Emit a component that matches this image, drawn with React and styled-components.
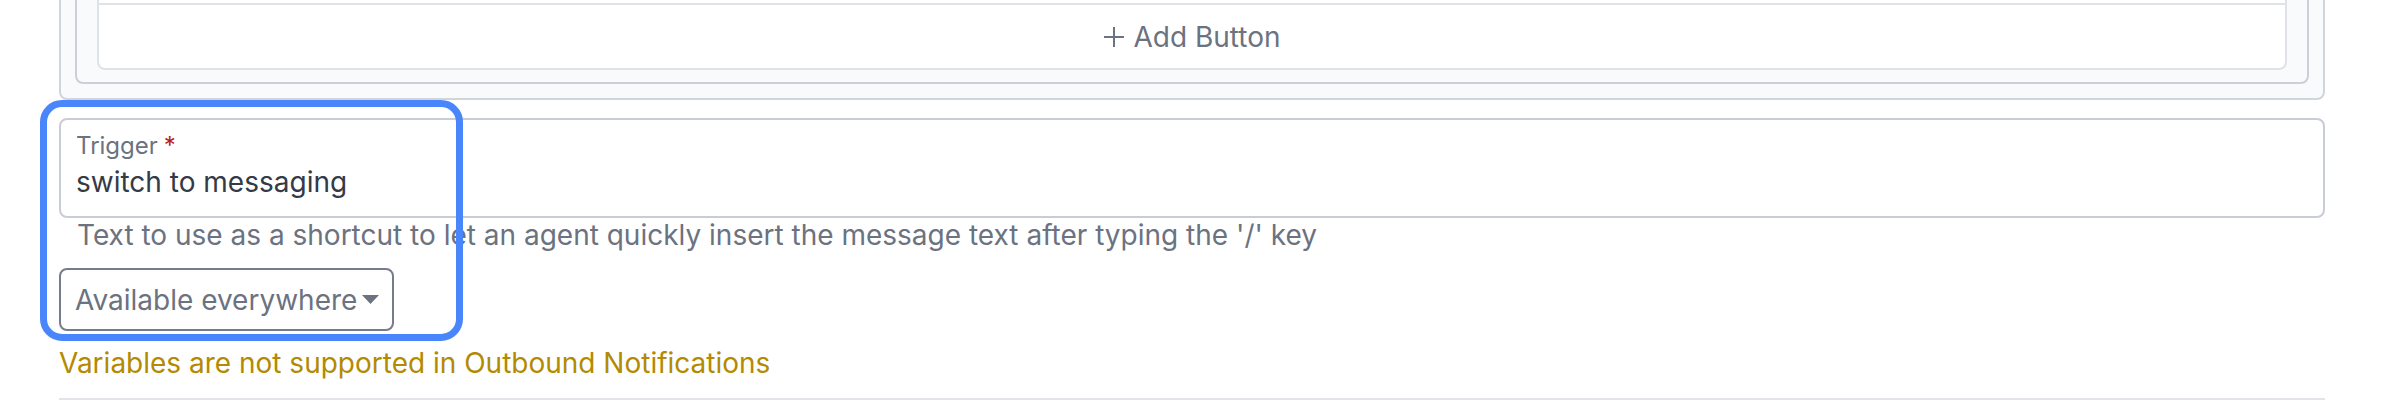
import React from "react";
import styled, { createGlobalStyle } from "styled-components";

const GlobalStyle = createGlobalStyle`
  html, body {
    margin: 0;
    padding: 0;
    background: #ffffff;
  }
  body {
    font-family: Inter, "Noto Sans", "Liberation Sans", sans-serif;
    -webkit-font-smoothing: antialiased;
  }
`;

const Page = styled.div`
  margin-top: -95px;
  padding: 0 71px 0 59px;
`;

const OuterPanel = styled.div`
  border: 2px solid #d1d5db;
  border-radius: 8px;
  background: #f9fafb;
  padding: 14px;
`;

const MiddlePanel = styled.div`
  border: 2px solid #cbd0d8;
  border-radius: 8px;
  background: #f9fafb;
  padding: 20px 20px 12px;
`;

const ButtonList = styled.div`
  background: #ffffff;
  border: 2px solid #dfe2e7;
  border-top: none;
  border-radius: 0 0 8px 8px;
`;

const ButtonRow = styled.div`
  height: 60px;
`;

const AddButton = styled.button`
  all: unset;
  box-sizing: border-box;
  width: 100%;
  height: 65px;
  border-top: 2px solid #dfe2e7;
  display: flex;
  align-items: center;
  justify-content: center;
  gap: 8px;
  font-size: 28px;
  color: #6b7280;
  cursor: pointer;
`;

const FieldGroup = styled.div`
  position: relative;
  margin-top: 18px;
`;

const Highlight = styled.div`
  position: absolute;
  top: -18px;
  left: -19px;
  width: 423px;
  height: 241px;
  box-sizing: border-box;
  border: 7px solid #4a86fb;
  border-radius: 22px;
  pointer-events: none;
`;

const InputBox = styled.div`
  border: 2px solid #c8ccd5;
  border-radius: 8px;
  padding: 12px 17px 16px 15px;
`;

const Label = styled.div`
  font-size: 24px;
  line-height: 28px;
  color: #6b7280;
`;

const Required = styled.span`
  color: #b91c1c;
  margin-left: 6px;
`;

const Value = styled.div`
  margin-top: 4px;
  font-size: 28px;
  line-height: 36px;
  color: #343a46;
`;

const Helper = styled.div`
  padding-left: 18px;
  font-size: 28px;
  line-height: 34px;
  color: #6b7280;
`;

const Select = styled.div`
  margin-top: 16px;
  box-sizing: border-box;
  height: 63px;
  width: fit-content;
  display: flex;
  align-items: center;
  gap: 5px;
  padding: 0 13px 0 14px;
  border: 2px solid #767c8b;
  border-radius: 8px;
  font-size: 28px;
  color: #6b7280;
`;

const Warning = styled.div`
  margin-top: 15px;
  font-size: 28px;
  line-height: 34px;
  color: #b38a00;
`;

const Divider = styled.hr`
  margin: 18px 0 0;
  border: none;
  border-top: 2px solid #e2e4e9;
`;

const PlusIcon = () => (
  <svg width="22" height="22" viewBox="0 0 22 22" fill="none">
    <path d="M11 1v20M1 11h20" stroke="#6b7280" strokeWidth="2" />
  </svg>
);

const Caret = () => (
  <svg width="17" height="9" viewBox="0 0 17 9">
    <path d="M0 0h17L8.5 9z" fill="#6b7280" />
  </svg>
);

const App = () => {
  return (
    <>
      <GlobalStyle />
      <Page>
        <OuterPanel>
          <MiddlePanel>
            <ButtonList>
              <ButtonRow />
              <AddButton>
                <PlusIcon />
                Add Button
              </AddButton>
            </ButtonList>
          </MiddlePanel>
        </OuterPanel>

        <FieldGroup>
          <InputBox>
            <Label>
              Trigger<Required>*</Required>
            </Label>
            <Value>switch to messaging</Value>
          </InputBox>
          <Helper>
            Text to use as a shortcut to let an agent quickly insert the
            message text after typing the '/' key
          </Helper>
          <Select>
            Available everywhere
            <Caret />
          </Select>
          <Highlight />
        </FieldGroup>

        <Warning>Variables are not supported in Outbound Notifications</Warning>
        <Divider />
      </Page>
    </>
  );
};

export default App;
